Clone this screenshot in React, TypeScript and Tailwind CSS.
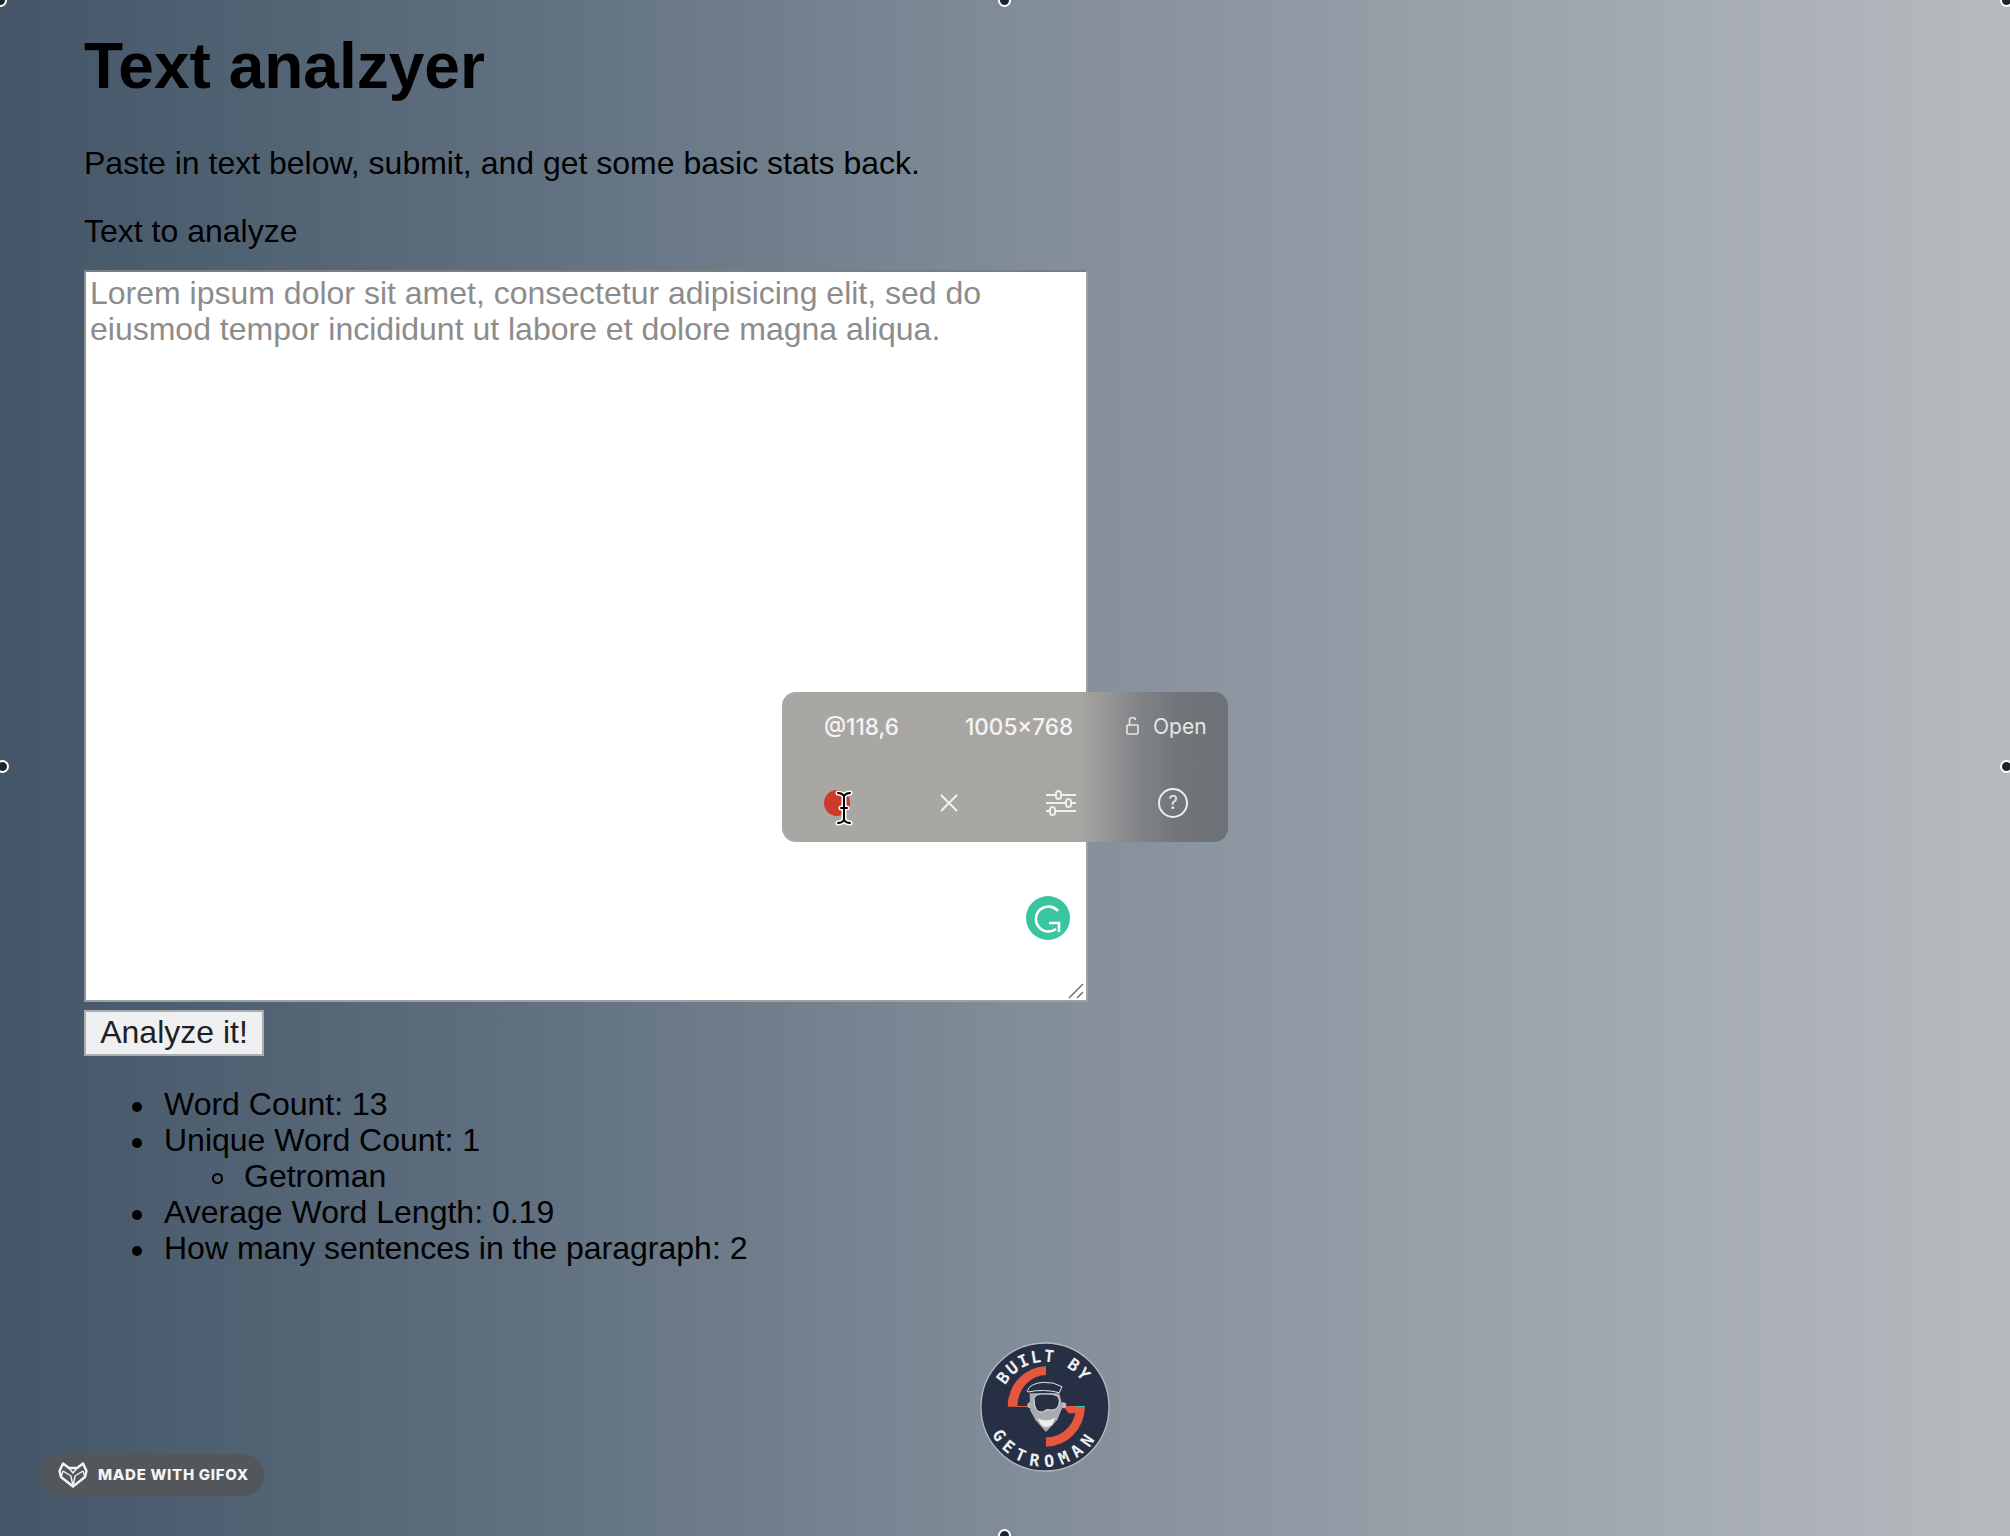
import React from "react";

const SANS = "font-['Liberation_Sans',Arial,sans-serif]";

function Handle({ className }: { className: string }) {
  return <div className={`absolute w-[13px] h-[13px] rounded-full bg-[#1c2430] border-[2px] border-white ${className}`} />;
}

function Logo() {
  return (
    <svg viewBox="60 36 390 390" className="w-[130px] h-[130px]">
      <defs>
        <path id="arcTop" d="M122 254 A135 135 0 1 1 388 254" fill="none" />
        <path id="arcBot" d="M80 200 A178 178 0 1 0 430 200" fill="none" />
      </defs>
      <circle cx="255" cy="231" r="192" fill="#272f45" stroke="#b4b9be" strokeWidth="4" />
      <path d="M258 109 A115 121 0 0 0 143 230 L172 230 A86 95 0 0 1 258 135 Z" fill="#e5573f" />
      <path d="M172 228 H206 V231 H172 Z" fill="#e5573f" />
      <path d="M308 228 L375 228 A117 122 0 0 1 258 350 L258 322 A88 92 0 0 0 346 250 L326 250 Z" fill="#e5573f" />
      <path d="M345 228 H375 V231 H345 Z" fill="#3cc4b0" />
      <circle cx="211" cy="226" r="9" fill="#b9bcc0" />
      <circle cx="310" cy="226" r="9" fill="#b9bcc0" />
      <path d="M209 190 L298 190 L308 230 L292 270 L258 306 L226 270 L210 240 Z" fill="#a9abae" />
      <path d="M202 182 Q210 160 250 157 Q280 155 306 170 L298 188 Q250 176 204 186 Z" fill="#272f45" stroke="#e4e6e8" strokeWidth="3" />
      <path d="M222 205 Q226 190 258 192 Q298 190 298 212 Q298 240 274 240 Q258 236 248 246 Q222 250 222 205 Z" fill="#272f45" stroke="#dfe1e3" strokeWidth="3" />
      <path d="M232 265 Q258 278 286 263 L276 286 Q258 296 244 286 Z" fill="#eceded" />
      <text className="font-['DejaVu_Sans_Mono',monospace]" fontWeight="700" fontSize="50" fill="#eef0f1" letterSpacing="5">
        <textPath href="#arcTop" startOffset="49%" textAnchor="middle">BUILT BY</textPath>
      </text>
      <text className="font-['DejaVu_Sans_Mono',monospace]" fontWeight="700" fontSize="50" fill="#eef0f1" letterSpacing="19">
        <textPath href="#arcBot" startOffset="50%" textAnchor="middle">GETROMAN</textPath>
      </text>
    </svg>
  );
}

function GifoxBadge() {
  return (
    <div className="absolute left-[40px] top-[1454px] h-[42px] w-[224px] rounded-full bg-[#53575c] flex items-center pl-[18px] gap-[10px]">
      <svg viewBox="0 0 30 26" className="w-[30px] h-[26px]" fill="none" stroke="#f4f5f5" strokeWidth="2.4" strokeLinejoin="round">
        <path d="M1.5 9 L5 1.5 L11 6 H19 L25 1.5 L28.5 9 L27 15 L15 24.5 L3 15 Z" />
        <path d="M5 9 L13 14 L15 24.5 L17 14 L25 9 M11 6 L15 11 L19 6 M5 9 L3 15 M25 9 L27 15" strokeWidth="1.4" />
      </svg>
      <span className="font-['Inter',sans-serif] font-extrabold text-[15px] tracking-[0.7px] text-[#f4f5f5] whitespace-nowrap">MADE WITH GIFOX</span>
    </div>
  );
}

function CursorOnRecord() {
  return (
    <div className="relative w-[116px] h-[36px]">
      <div className="w-[26px] h-[26px] rounded-full bg-[#cb3a2a]" />
      <svg viewBox="0 0 18 36" className="absolute left-[11px] top-0 w-[18px] h-[36px]" fill="none" strokeLinecap="round">
        <path d="M3 3 Q7 3 9 6 Q11 3 15 3 M9 6 V30 M3 33 Q7 33 9 30 Q11 33 15 33 M6 18 H12" stroke="#fff" strokeWidth="5" />
        <path d="M3 3 Q7 3 9 6 Q11 3 15 3 M9 6 V30 M3 33 Q7 33 9 30 Q11 33 15 33 M6 18 H12" stroke="#000" strokeWidth="2" />
      </svg>
    </div>
  );
}

function CapturePanel() {
  return (
    <div className="absolute left-[782px] top-[692px] w-[446px] h-[150px] rounded-[14px] bg-[linear-gradient(90deg,#a9a7a4_0%,#a8a6a3_67%,#9a9897_72%,#85878a_78%,#72767a_88%,#6c7175_100%)] text-[#f4f4f3] font-['Inter',sans-serif]">
      <div className="flex h-[70px] items-center text-[22.5px] font-medium">
        <span className="w-[183px] pl-[42px] whitespace-nowrap">@118,6</span>
        <span className="w-[161px] whitespace-nowrap">1005×768</span>
        <span className="flex items-center gap-[14px] whitespace-nowrap text-[21px] font-normal text-[#e6e7e7]">
          <svg viewBox="0 0 13 18" className="w-[13px] h-[18px] -mt-[3px]" fill="none" stroke="currentColor" strokeWidth="1.6">
            <rect x="1" y="8" width="11" height="9" rx="1" />
            <path d="M3.5 8 V4 A3 3 0 0 1 9.5 3" />
          </svg>
          Open
        </span>
      </div>
      <div className="flex items-start pl-[42px] pt-[28px]">
        <CursorOnRecord />
        <div className="w-[106px] pt-[4px]">
          <svg viewBox="0 0 18 18" className="w-[18px] h-[18px]" stroke="#f3f3f2" strokeWidth="2">
            <path d="M1 1 L17 17 M17 1 L1 17" />
          </svg>
        </div>
        <svg viewBox="0 0 30 26" className="w-[30px] h-[26px] mr-[82px]" fill="none" stroke="#eeeeed" strokeWidth="2">
          <path d="M0 5 H10 M15 5 H30 M0 13 H20 M25 13 H30 M0 21 H4 M9 21 H30" />
          <rect x="10" y="1" width="5" height="8" rx="2.5" />
          <rect x="20" y="9" width="5" height="8" rx="2.5" />
          <rect x="4" y="17" width="5" height="8" rx="2.5" />
        </svg>
        <div className="-mt-[2px] w-[30px] h-[30px] rounded-full border-[2px] border-[#eeeeed] flex items-center justify-center text-[18px] leading-none text-[#eeeeed]">?</div>
      </div>
    </div>
  );
}

function Disc() {
  return <span className="shrink-0 mt-[16px] mr-[22px] w-[10px] h-[10px] rounded-full bg-black" />;
}

function Ring() {
  return <span className="shrink-0 mt-[15px] mr-[21px] w-[11px] h-[11px] rounded-full border-[2px] border-black" />;
}

export default function App() {
  return (
    <div className={`relative w-[2010px] h-[1536px] overflow-hidden bg-[linear-gradient(90deg,#435567_0%,#5f6f7f_25%,#808c98_50%,#9ca3ac_75%,#b6bbbf_100%)] text-black ${SANS}`}>
      <div className="pl-[84px]">
        <h1 className="text-[64px] leading-[72px] font-bold pt-[30px] mb-[43px]">Text analzyer</h1>
        <p className="text-[32px] leading-[36px] mb-[32px]">Paste in text below, submit, and get some basic stats back.</p>
        <label className="block text-[32px] leading-[36px] mb-[21px]">Text to analyze</label>
        <div className="relative w-[1004px] h-[732px]">
          <textarea
            placeholder="Lorem ipsum dolor sit amet, consectetur adipisicing elit, sed do eiusmod tempor incididunt ut labore et dolore magna aliqua."
            className="block w-full h-full bg-white border-[2px] border-[#a0a0a0] border-t-[#7b7d80] border-l-[#8d9094] px-[4px] pt-[3px] text-[32px] leading-[36px] placeholder:text-[#8c8c8c] resize-none"
          />
          <div className="absolute right-[18px] bottom-[62px] w-[44px] h-[44px] rounded-full bg-[#3ac49f] flex items-center justify-center">
            <svg viewBox="0 0 34 34" className="w-[34px] h-[34px]" fill="none" stroke="#fff" strokeWidth="2.6">
              <path d="M27 10 A12.5 12.5 0 1 0 25 28" />
              <path d="M18 22 H28 V31" />
            </svg>
          </div>
          <svg viewBox="0 0 18 16" className="absolute right-[2px] bottom-[3px] w-[18px] h-[16px]" stroke="#6e6e6e" strokeWidth="1.5">
            <path d="M1 15 L15 1 M9 15 L15 9" />
          </svg>
        </div>
        <button className="block mt-[8px] w-[180px] h-[46px] pb-[3px] bg-[#eff0f1] border-[2px] border-[#acadae] text-[32px] leading-[36px] text-[#1f2024]">Analyze it!</button>
        <ul className="mt-[30px] pl-[48px] list-none text-[32px] leading-[36px]">
          <li className="flex"><Disc /><span>Word Count: 13</span></li>
          <li className="flex">
            <Disc />
            <div>
              <span>Unique Word Count: 1</span>
              <ul className="list-none pl-[48px]">
                <li className="flex"><Ring /><span>Getroman</span></li>
              </ul>
            </div>
          </li>
          <li className="flex"><Disc /><span>Average Word Length: 0.19</span></li>
          <li className="flex"><Disc /><span>How many sentences in the paragraph: 2</span></li>
        </ul>
        <div className="mt-[76px] ml-[896px] w-[130px]">
          <Logo />
        </div>
      </div>

      <CapturePanel />
      <GifoxBadge />

      <Handle className="-left-[6px] -top-[6px]" />
      <Handle className="left-[998px] -top-[6px]" />
      <Handle className="-right-[3px] -top-[6px]" />
      <Handle className="-left-[4px] top-[760px]" />
      <Handle className="-right-[3px] top-[760px]" />
      <Handle className="left-[998px] -bottom-[6px]" />
    </div>
  );
}
